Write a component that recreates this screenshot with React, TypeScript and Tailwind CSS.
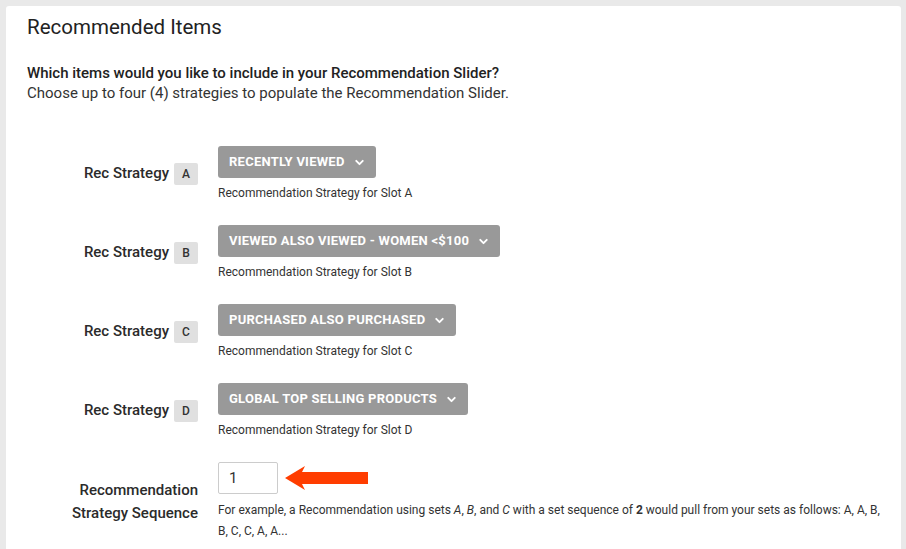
import { ChevronDown } from "lucide-react";

const strategies = [
  { slot: "A", name: "Recently Viewed" },
  { slot: "B", name: "Viewed Also Viewed - Women <$100" },
  { slot: "C", name: "Purchased Also Purchased" },
  { slot: "D", name: "Global Top Selling Products" },
];

function StrategyRow({ slot, name }: { slot: string; name: string }) {
  return (
    <div className="flex items-center">
      <div className="w-[192px] flex items-center justify-end gap-[5px]">
        <span className="text-[15px] font-medium text-[#2b2b2b]">Rec Strategy</span>
        <span className="w-[24px] h-[22px] rounded-[2px] bg-[#e0e0e0] flex items-center justify-center text-[12px] font-medium text-[#333]">
          {slot}
        </span>
      </div>
      <div className="ml-[20px] flex flex-col">
        <button className="self-start h-[32px] pl-[11px] pr-[10px] rounded-[3px] bg-[#999999] text-white text-[13px] font-bold uppercase tracking-[0.25px] flex items-center gap-[8px]">
          {name}
          <ChevronDown size={13} strokeWidth={3.5} />
        </button>
        <p className="mt-[7px] text-[12px] leading-[16px] text-[#333]">
          Recommendation Strategy for Slot {slot}
        </p>
      </div>
    </div>
  );
}

export default function App() {
  return (
    <div
      className="w-[906px] h-[549px] bg-[#e9e9e9] pt-[6px] pl-[6px] pr-[5px] overflow-hidden"
      style={{ fontFamily: "Roboto, 'Liberation Sans', sans-serif" }}
    >
      <div className="bg-white rounded-[3px] h-[560px] pl-[21px] pr-[12px] pt-[7px]">
        <h1 className="text-[20.5px] leading-[28px] text-[#222]">Recommended Items</h1>
        <p className="mt-[22px] text-[15px] leading-[20px] font-medium text-[#222]">
          Which items would you like to include in your Recommendation Slider?
        </p>
        <p className="text-[15px] leading-[20px] text-[#333]">
          Choose up to four (4) strategies to populate the Recommendation Slider.
        </p>

        <div className="mt-[43px] -ml-[21px] flex flex-col gap-[24px]">
          {strategies.map((s) => (
            <StrategyRow key={s.slot} slot={s.slot} name={s.name} />
          ))}

          <div className="flex items-center">
            <div className="w-[192px] text-right text-[15px] leading-[23px] font-medium text-[#2b2b2b]">
              Recommendation
              <br />
              Strategy Sequence
            </div>
            <div className="ml-[20px] flex-1 flex flex-col">
              <div className="flex items-center">
                <input
                  defaultValue="1"
                  className="w-[60px] h-[32px] border border-[#cccccc] rounded-[2px] px-[10px] text-[15px] text-[#333] outline-none"
                />
                <svg width="84" height="26" viewBox="0 0 84 26" className="ml-[7px]">
                  <polygon points="0,13 20,1 17,7 83,7 83,19 17,19 20,25" fill="#ff3d00" />
                </svg>
              </div>
              <p className="mt-[6px] text-[12px] leading-[21px] text-[#333]">
                For example, a Recommendation using sets <i>A</i>, <i>B</i>, and <i>C</i> with a set
                sequence of <b>2</b> would pull from your sets as follows: A, A, B, B, C, C, A, A...
              </p>
            </div>
          </div>
        </div>
      </div>
    </div>
  );
}
